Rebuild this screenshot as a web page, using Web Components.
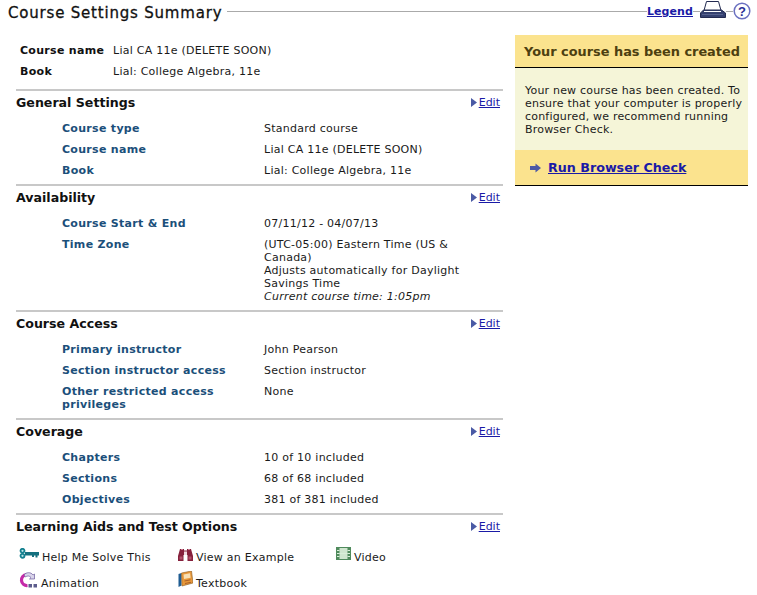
<!DOCTYPE html>
<html>
<head>
<meta charset="utf-8">
<title>Course Settings Summary</title>
<style>
  html, body { margin: 0; padding: 0; background: #fff; }
  body { font-family: "DejaVu Sans", Verdana, sans-serif; font-size: 11px; line-height: 13px; letter-spacing: .25px; color: #1a1a1a; }
</style>
</head>
<body>
<summary-page></summary-page>

<script>
const ICONS = {
  key: `<svg width="20" height="11" viewBox="0 0 20 11"><circle cx="3.500" cy="2.800" r="2" fill="#bfe6ea" stroke="#14808f" stroke-width="1.800"/><circle cx="3.500" cy="7.800" r="2" fill="#bfe6ea" stroke="#14808f" stroke-width="1.800"/><path d="M6 4h14v3.500h-1.500V9.500h-2V7.500h-1.500V9h-2V7.500H6z" fill="#14707f"/></svg>`,
  binoculars: `<svg width="15" height="13" viewBox="0 0 15 13"><path d="M2 1h4v1.500h3V1h4l2 7v5H9.500V7h-4v6H0V8z" fill="#85203c"/><path d="M6 3.500h3V7H6z" fill="#f0d9df"/><path d="M1.500 8.500h3v3h-3zM10.500 8.500h3v3h-3z" fill="#b2506a"/><path d="M3 1.500h2M10 1.500h2" stroke="#c77f93"/></svg>`,
  film: `<svg width="15" height="13" viewBox="0 0 15 13"><rect x=".5" y=".5" width="14" height="12" fill="#cfe6cf" stroke="#4f8a5c"/><rect x="1" y="1" width="2.500" height="11" fill="#4f8a5c"/><rect x="11.500" y="1" width="2.500" height="11" fill="#4f8a5c"/><path d="M1 3.500h2.500M1 6.500h2.500M1 9.500h2.500M11.500 3.500H14M11.500 6.500H14M11.500 9.500H14M3.500 6.500h8" stroke="#d9efd9"/></svg>`,
  animation: `<svg width="19" height="16" viewBox="0 0 19 16"><path d="M7.500 2.500a5.500 5.500 0 1 0 1 11" fill="none" stroke="#c42aa8" stroke-width="3.200"/><path d="M5 3c2-3 7-3.200 9 0l1.500-1v5h-5l1.500-1.400C10.500 3.500 8 3.600 6.500 5z" fill="#d9d4ea" stroke="#6a5a9c" stroke-width=".7"/><path d="M9.500 12h3.500v3.500H9.500zM14.500 12H18v3.500h-3.500z" fill="#5c5c8c"/></svg>`,
  book: `<svg width="15" height="16" viewBox="0 0 15 16"><path d="M.5 3l3-1v12.500l-3 1.500z" fill="#1f5c92"/><path d="M3.500 2l10-2L15 12 4 15z" fill="#e8983a" stroke="#8a5a20" stroke-width=".6"/><path d="M5.500 3.500l6.500-1.200.6 4.500L6 8z" fill="#f8e0b4"/><path d="M6.500 10l6-1.200M7 12.500l6-1.200" stroke="#a8602a"/></svg>`,
  printer: `<svg class="printer" width="26" height="17" viewBox="0 0 26 17"><path d="M6.500.5h12l2.500 9H4z" fill="#fff" stroke="#222a50"/><path d="M3.500 9h18L25.500 12v4.500H.5V12z" fill="#34406f" stroke="#222a50"/><path d="M4 10.500h17" stroke="#fff"/><path d="M2 13.500h21" stroke="#56628f"/></svg>`,
  help: `<svg width="18" height="18" viewBox="0 0 18 18"><circle cx="9" cy="9" r="7.800" fill="#fff" stroke="#6a70c0" stroke-width="1.500"/><text x="9" y="13.500" text-anchor="middle" font-family="Liberation Sans, sans-serif" font-size="13" font-weight="bold" fill="#2a2f96">?</text></svg>`,
  arrow: `<svg width="12" height="10" viewBox="0 0 12 10"><path d="M0 3h5.500V.5L11 5 5.500 9.500V7H0z" fill="#4d59a5"/></svg>`,
  tri: `<svg width="6" height="9" viewBox="0 0 6 9"><path d="M0 0l6 4.500L0 9z" fill="#4a5aa5"/></svg>`
};

class SummaryRow extends HTMLElement {
  constructor() {
    super();
    this.attachShadow({ mode: "open" });
    this.shadowRoot.innerHTML = `
      <style>
        :host { display: grid; grid-template-columns: 93px 1fr; padding-left: 4px; }
        b { color: #111; letter-spacing: .3px; }
      </style>
      <b>${this.getAttribute("label")}</b><span><slot></slot></span>`;
  }
}

class SettingRow extends HTMLElement {
  constructor() {
    super();
    this.attachShadow({ mode: "open" });
    this.shadowRoot.innerHTML = `
      <style>
        :host { display: grid; grid-template-columns: 202px 198px; padding-left: 46px; }
        b { color: #1b4f7a; padding-right: 30px; letter-spacing: .3px; }
      </style>
      <b>${this.getAttribute("label")}</b><span><slot></slot></span>`;
  }
}

class SettingsSection extends HTMLElement {
  constructor() {
    super();
    this.attachShadow({ mode: "open" });
    this.shadowRoot.innerHTML = `
      <style>
        :host { display: block; border-top: 2px solid #c8c8c8; padding-top: 4px; }
        header { display: flex; justify-content: space-between; align-items: center; height: 16px; padding-right: 3px; }
        h2 { margin: 0; font-size: 12.6px; line-height: 16px; font-weight: bold; letter-spacing: 0; color: #111; }
        a { display: flex; align-items: center; gap: 2px; margin-top: -2px; color: #1a1aa6; text-decoration: underline; font-size: 11px; letter-spacing: 0; }
        .rows { display: flex; flex-direction: column; gap: 8px; padding: 11px 0 7px; }
      </style>
      <header><h2>${this.getAttribute("heading")}</h2><a href="#">${ICONS.tri}<span>Edit</span></a></header>
      <div class="rows"><slot></slot></div>`;
  }
}

class AidItem extends HTMLElement {
  constructor() {
    super();
    this.attachShadow({ mode: "open" });
    this.shadowRoot.innerHTML = `
      <style>
        :host { display: flex; align-items: center; gap: 3px; height: 18px; }
        .ic { display: flex; align-self: flex-start; margin-top: ${this.getAttribute("nudge") || 0}px; }
      </style>
      <span class="ic">${ICONS[this.getAttribute("icon")]}</span><span><slot></slot></span>`;
  }
}

class CalloutPanel extends HTMLElement {
  constructor() {
    super();
    this.attachShadow({ mode: "open" });
    this.shadowRoot.innerHTML = `
      <style>
        :host { display: block; width: 233px; }
        h3 { margin: 0; box-sizing: content-box; height: 23px; padding: 9px 0 0 9px; background: #fbe38e; border-bottom: 1px solid #000; font-size: 12.9px; line-height: 15px; letter-spacing: 0; color: #4d3f10; white-space: nowrap; }
        p { margin: 0; background: #f5f5d8; padding: 16px 2px 14px 10px; height: 52px; letter-spacing: .2px; }
        .go { display: flex; align-items: center; gap: 6px; height: 35px; padding-left: 15px; background: #fbe38e; border-bottom: 1px solid #000; font-size: 12.7px; font-weight: bold; letter-spacing: 0; }
        a { color: #1a1aa6; text-decoration: underline; }
      </style>
      <h3><slot name="title"></slot></h3>
      <p><slot></slot></p>
      <div class="go">${ICONS.arrow}<a href="#"><slot name="action"></slot></a></div>`;
  }
}

class PageHeader extends HTMLElement {
  constructor() {
    super();
    this.attachShadow({ mode: "open" });
    this.shadowRoot.innerHTML = `
      <style>
        :host { display: flex; align-items: center; height: 23px; margin-bottom: 1px; padding: 0 6px 0 8px; }
        h1 { margin: 0 5px 0 0; padding-top: 2px; font-size: 15px; line-height: 20px; font-weight: normal; letter-spacing: .8px; color: #111; white-space: nowrap; -webkit-text-stroke: .3px #111; }
        .line { flex: 1; height: 1px; background: #aaa; }
        .bit { width: 7px; height: 1px; background: #aaa; }
        a { color: #1a1aa6; font-weight: bold; text-decoration: underline; letter-spacing: .1px; }
        svg { display: block; margin-top: -2px; }
        svg.printer { margin-top: -4px; }
      </style>
      <h1><slot></slot></h1><div class="line"></div>
      <a href="#">Legend</a><div class="bit"></div>${ICONS.printer}<div class="bit"></div>${ICONS.help}`;
  }
}

class SummaryPage extends HTMLElement {
  constructor() {
    super();
    this.attachShadow({ mode: "open" });
    this.shadowRoot.innerHTML = `
      <style>
        :host { display: block; width: 757px; height: 595px; overflow: hidden; }
        .main { display: grid; grid-template-columns: 487px 233px; gap: 12px; padding: 11px 0 0 16px; }
        .summary { display: flex; flex-direction: column; gap: 8px; padding: 9px 0 11px; }
        .aids { display: grid; grid-template-columns: 159px 158px 1fr; grid-auto-rows: 26px; padding: 2px 0 0 3px; }
      </style>
      <page-header>Course Settings Summary</page-header>
      <div class="main">
        <div>
          <div class="summary">
            <summary-row label="Course name">Lial CA 11e (DELETE SOON)</summary-row>
            <summary-row label="Book">Lial: College Algebra, 11e</summary-row>
          </div>
          <settings-section heading="General Settings">
            <setting-row label="Course type">Standard course</setting-row>
            <setting-row label="Course name">Lial CA 11e (DELETE SOON)</setting-row>
            <setting-row label="Book">Lial: College Algebra, 11e</setting-row>
          </settings-section>
          <settings-section heading="Availability">
            <setting-row label="Course Start &amp; End">07/11/12 - 04/07/13</setting-row>
            <setting-row label="Time Zone">(UTC-05:00) Eastern Time (US &amp; Canada)<br>Adjusts automatically for Daylight Savings Time<br><i>Current course time: 1:05pm</i></setting-row>
          </settings-section>
          <settings-section heading="Course Access">
            <setting-row label="Primary instructor">John Pearson</setting-row>
            <setting-row label="Section instructor access">Section instructor</setting-row>
            <setting-row label="Other restricted access privileges">None</setting-row>
          </settings-section>
          <settings-section heading="Coverage">
            <setting-row label="Chapters">10 of 10 included</setting-row>
            <setting-row label="Sections">68 of 68 included</setting-row>
            <setting-row label="Objectives">381 of 381 included</setting-row>
          </settings-section>
          <settings-section heading="Learning Aids and Test Options">
            <div class="aids">
              <aid-item icon="key" nudge="0">Help Me Solve This</aid-item>
              <aid-item icon="binoculars" nudge="0">View an Example</aid-item>
              <aid-item icon="film" nudge="-1">Video</aid-item>
              <aid-item icon="animation" nudge="-2">Animation</aid-item>
              <aid-item icon="book" nudge="-3">Textbook</aid-item>
            </div>
          </settings-section>
        </div>
        <callout-panel>
          <span slot="title">Your course has been created</span>
          Your new course has been created. To ensure that your computer is properly configured, we recommend running Browser Check.
          <span slot="action">Run Browser Check</span>
        </callout-panel>
      </div>`;
  }
}

customElements.define("summary-row", SummaryRow);
customElements.define("setting-row", SettingRow);
customElements.define("settings-section", SettingsSection);
customElements.define("aid-item", AidItem);
customElements.define("callout-panel", CalloutPanel);
customElements.define("page-header", PageHeader);
customElements.define("summary-page", SummaryPage);
</script>
</body>
</html>
